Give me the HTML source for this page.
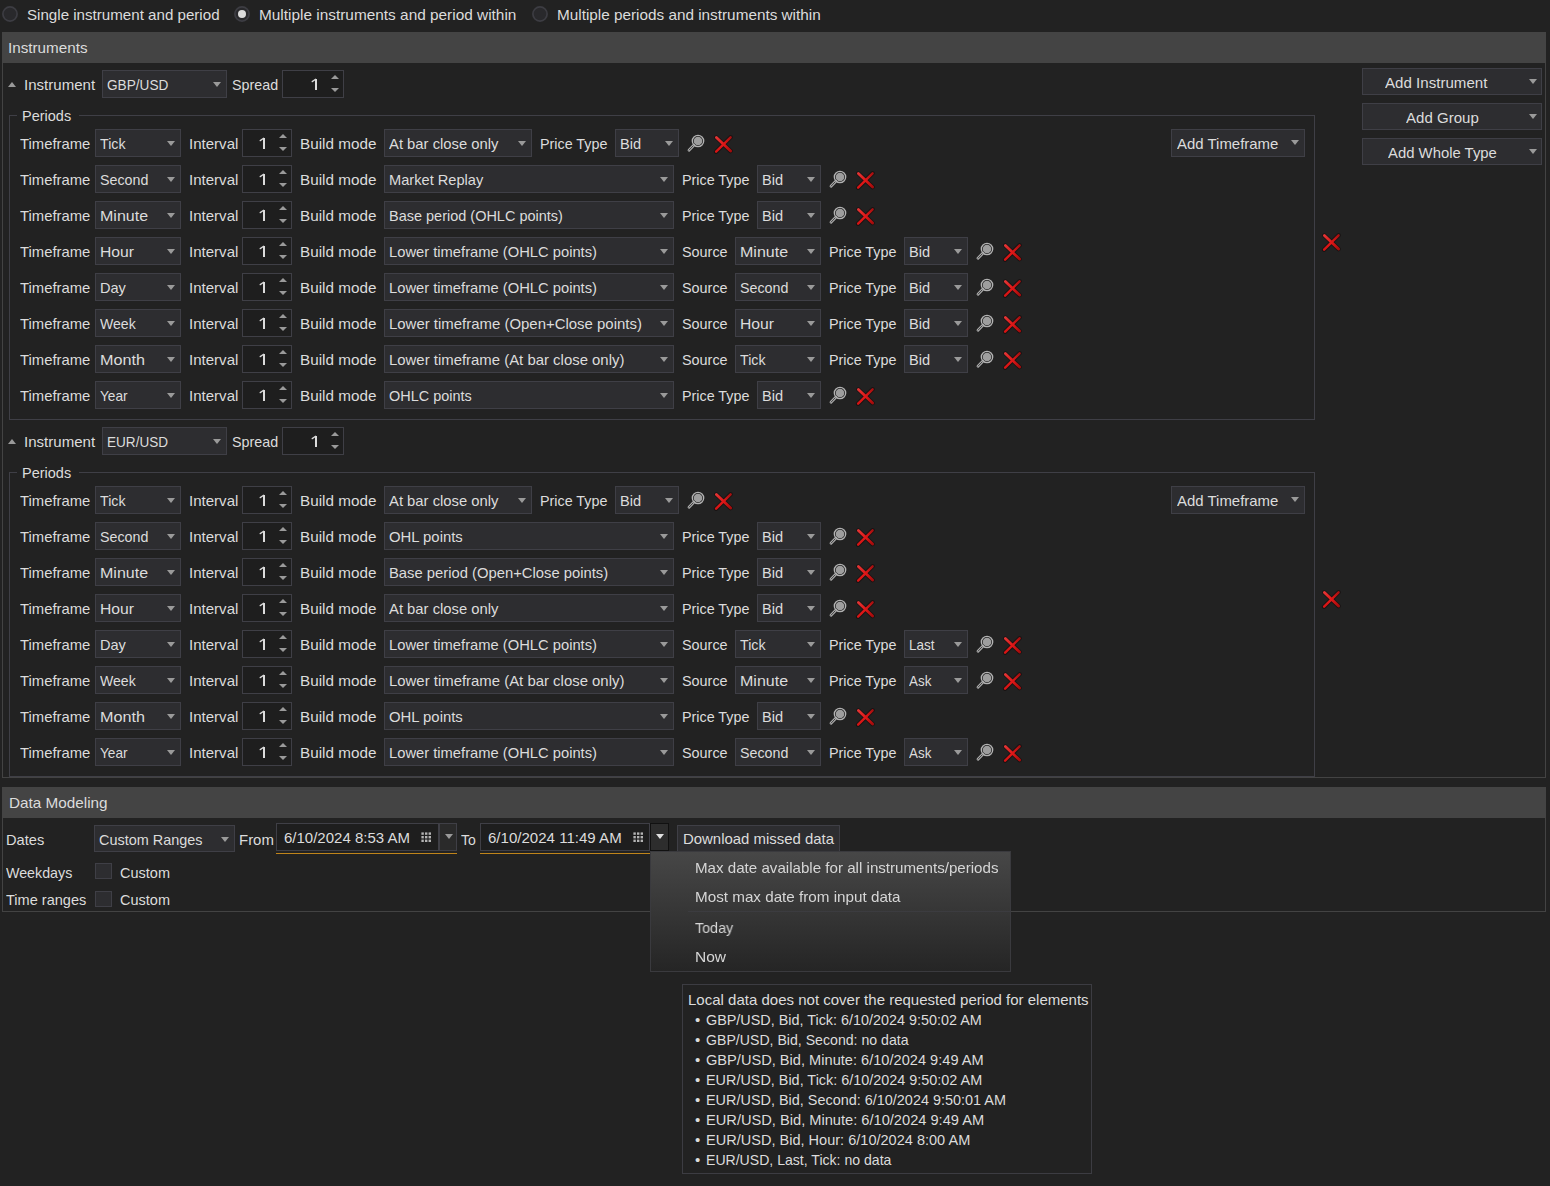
<!DOCTYPE html><html><head><meta charset="utf-8"><style>
html,body{margin:0;padding:0;width:1550px;height:1186px;overflow:hidden;background:#222222}
.a{position:absolute}
.t{position:absolute;font-family:"Liberation Sans",sans-serif;font-size:15px;line-height:17px;color:#dcdcdc;white-space:nowrap}
.m{position:absolute;font-family:"Liberation Sans",sans-serif;font-size:15px;line-height:17px;color:#d6d6d6;white-space:nowrap;will-change:transform}
</style></head><body>

<svg class="a" style="left:2px;top:6px" width="16" height="16" viewBox="0 0 16 16"><circle cx="8" cy="8" r="7.1" fill="#29292c" stroke="#3d3d43" stroke-width="1.7"/></svg>
<div class="t" style="left:27px;top:6px;transform:scaleX(1.0084);transform-origin:0 0;">Single instrument and period</div>
<svg class="a" style="left:234px;top:6px" width="16" height="16" viewBox="0 0 16 16"><circle cx="8" cy="8" r="7.1" fill="#29292c" stroke="#3d3d43" stroke-width="1.7"/><circle cx="8" cy="8" r="4" fill="#dcdcdc"/></svg>
<div class="t" style="left:259px;top:6px;transform:scaleX(1.0256);transform-origin:0 0;">Multiple instruments and period within</div>
<svg class="a" style="left:532px;top:6px" width="16" height="16" viewBox="0 0 16 16"><circle cx="8" cy="8" r="7.1" fill="#29292c" stroke="#3d3d43" stroke-width="1.7"/></svg>
<div class="t" style="left:557px;top:6px;transform:scaleX(1.0202);transform-origin:0 0;">Multiple periods and instruments within</div>
<div class="a" style="left:2px;top:32px;width:1544px;height:31px;background:#444444;"></div>
<div class="t" style="left:8px;top:39px;transform:scaleX(1.0148);transform-origin:0 0;">Instruments</div>
<div class="a" style="left:2px;top:63px;width:1px;height:715px;background:#434343;"></div>
<div class="a" style="left:1545px;top:63px;width:1px;height:715px;background:#434343;"></div>
<div class="a" style="left:2px;top:777px;width:1544px;height:1px;background:#434343;"></div>
<div class="a" style="left:1362px;top:68px;width:180px;height:27px;background:#2d2d30;box-sizing:border-box;border:1px solid #3f3f46;"></div>
<div class="t" style="left:1385px;top:74px;transform:scaleX(1.0063);transform-origin:0 0;">Add Instrument</div>
<div class="a" style="left:1528.5px;top:79px;width:0;height:0;border-left:4.0px solid transparent;border-right:4.0px solid transparent;border-top:5px solid #9a9a9a"></div>
<div class="a" style="left:1362px;top:103px;width:180px;height:27px;background:#2d2d30;box-sizing:border-box;border:1px solid #3f3f46;"></div>
<div class="t" style="left:1406px;top:109px;transform:scaleX(1.0027);transform-origin:0 0;">Add Group</div>
<div class="a" style="left:1528.5px;top:114px;width:0;height:0;border-left:4.0px solid transparent;border-right:4.0px solid transparent;border-top:5px solid #9a9a9a"></div>
<div class="a" style="left:1362px;top:138px;width:180px;height:27px;background:#2d2d30;box-sizing:border-box;border:1px solid #3f3f46;"></div>
<div class="t" style="left:1388px;top:144px;transform:scaleX(0.9916);transform-origin:0 0;">Add Whole Type</div>
<div class="a" style="left:1528.5px;top:149px;width:0;height:0;border-left:4.0px solid transparent;border-right:4.0px solid transparent;border-top:5px solid #9a9a9a"></div>
<div class="a" style="left:8.0px;top:82px;width:0;height:0;border-left:4.0px solid transparent;border-right:4.0px solid transparent;border-bottom:5px solid #9a9a9a"></div>
<div class="t" style="left:24px;top:76px;transform:scaleX(1.0043);transform-origin:0 0;">Instrument</div>
<div class="a" style="left:102px;top:70px;width:125px;height:28px;background:#2d2d30;box-sizing:border-box;border:1px solid #3f3f46;"></div>
<div class="t" style="left:107px;top:76px;transform:scaleX(0.9087);transform-origin:0 0;">GBP/USD</div>
<div class="a" style="left:213.0px;top:82px;width:0;height:0;border-left:4.0px solid transparent;border-right:4.0px solid transparent;border-top:5px solid #9a9a9a"></div>
<div class="t" style="left:232px;top:76px;transform:scaleX(0.9536);transform-origin:0 0;">Spread</div>
<div class="a" style="left:282px;top:70px;width:62px;height:28px;background:#1e1e1e;box-sizing:border-box;border:1px solid #3f3f46;"></div>
<svg class="a" style="left:310px;top:78px" width="8" height="13" viewBox="0 0 8 13"><rect x="5" y="1" width="2" height="11" fill="#dcdcdc"/><path d="M2.2 3.6 L5.6 1.3" stroke="#dcdcdc" stroke-width="1.3" stroke-linecap="round"/></svg>
<div class="a" style="left:330.75px;top:74.8px;width:0;height:0;border-left:4.25px solid transparent;border-right:4.25px solid transparent;border-bottom:4.3px solid #9a9a9a"></div>
<div class="a" style="left:330.75px;top:88px;width:0;height:0;border-left:4.25px solid transparent;border-right:4.25px solid transparent;border-top:4.3px solid #9a9a9a"></div>
<div class="a" style="left:9px;top:115px;width:8px;height:1px;background:#3f3f46;"></div>
<div class="a" style="left:79px;top:115px;width:1236px;height:1px;background:#3f3f46;"></div>
<div class="a" style="left:9px;top:115px;width:1px;height:305px;background:#3f3f46;"></div>
<div class="a" style="left:1314px;top:115px;width:1px;height:305px;background:#3f3f46;"></div>
<div class="a" style="left:9px;top:419px;width:1306px;height:1px;background:#3f3f46;"></div>
<div class="t" style="left:22px;top:107px;transform:scaleX(0.9664);transform-origin:0 0;">Periods</div>
<div class="t" style="left:20px;top:135px;transform:scaleX(0.9890);transform-origin:0 0;">Timeframe</div>
<div class="a" style="left:95px;top:129px;width:86px;height:28px;background:#2d2d30;box-sizing:border-box;border:1px solid #3f3f46;"></div>
<div class="t" style="left:100px;top:135px;transform:scaleX(0.9476);transform-origin:0 0;">Tick</div>
<div class="a" style="left:167.0px;top:141px;width:0;height:0;border-left:4.0px solid transparent;border-right:4.0px solid transparent;border-top:5px solid #9a9a9a"></div>
<div class="t" style="left:189px;top:135px;transform:scaleX(1.0030);transform-origin:0 0;">Interval</div>
<div class="a" style="left:242px;top:129px;width:50px;height:28px;background:#1e1e1e;box-sizing:border-box;border:1px solid #3f3f46;"></div>
<svg class="a" style="left:258px;top:137px" width="8" height="13" viewBox="0 0 8 13"><rect x="5" y="1" width="2" height="11" fill="#dcdcdc"/><path d="M2.2 3.6 L5.6 1.3" stroke="#dcdcdc" stroke-width="1.3" stroke-linecap="round"/></svg>
<div class="a" style="left:278.75px;top:133.8px;width:0;height:0;border-left:4.25px solid transparent;border-right:4.25px solid transparent;border-bottom:4.3px solid #9a9a9a"></div>
<div class="a" style="left:278.75px;top:147px;width:0;height:0;border-left:4.25px solid transparent;border-right:4.25px solid transparent;border-top:4.3px solid #9a9a9a"></div>
<div class="t" style="left:300px;top:135px;transform:scaleX(1.0176);transform-origin:0 0;">Build mode</div>
<div class="a" style="left:384px;top:129px;width:148px;height:28px;background:#2d2d30;box-sizing:border-box;border:1px solid #3f3f46;"></div>
<div class="t" style="left:389px;top:135px;transform:scaleX(0.9875);transform-origin:0 0;">At bar close only</div>
<div class="a" style="left:518.0px;top:141px;width:0;height:0;border-left:4.0px solid transparent;border-right:4.0px solid transparent;border-top:5px solid #9a9a9a"></div>
<div class="t" style="left:540px;top:135px;transform:scaleX(0.9551);transform-origin:0 0;">Price Type</div>
<div class="a" style="left:615px;top:129px;width:64px;height:28px;background:#2d2d30;box-sizing:border-box;border:1px solid #3f3f46;"></div>
<div class="t" style="left:620px;top:135px;transform:scaleX(0.9736);transform-origin:0 0;">Bid</div>
<div class="a" style="left:665.0px;top:141px;width:0;height:0;border-left:4.0px solid transparent;border-right:4.0px solid transparent;border-top:5px solid #9a9a9a"></div>
<svg class="a" style="left:685px;top:133px" width="20" height="20" viewBox="0 0 20 20"><line x1="4" y1="17.2" x2="8.8" y2="12.2" stroke="#aaaaaa" stroke-width="2.8" stroke-linecap="round"/><line x1="4.1" y1="17.1" x2="8.4" y2="12.6" stroke="#262626" stroke-width="0.8" stroke-linecap="round"/><circle cx="13" cy="8" r="5.7" fill="none" stroke="#b2b2b2" stroke-width="1.3"/><circle cx="13" cy="8" r="4.3" fill="#9e9e9e"/></svg>
<svg class="a" style="left:713px;top:134px" width="20" height="20" viewBox="0 0 20 20"><defs><linearGradient id="rg1" gradientUnits="userSpaceOnUse" x1="3.4" y1="3.5" x2="17.6" y2="17.1"><stop offset="0" stop-color="#e23434"/><stop offset="0.5" stop-color="#e01818"/><stop offset="1" stop-color="#a60c0c"/></linearGradient><linearGradient id="rg2" gradientUnits="userSpaceOnUse" x1="17.6" y1="3.3" x2="3.1" y2="17.7"><stop offset="0" stop-color="#a81010"/><stop offset="0.5" stop-color="#e01818"/><stop offset="1" stop-color="#d61414"/></linearGradient></defs><path d="M3.4 3.5 L17.6 17.1 M17.6 3.3 L3.1 17.7" stroke="#0e0202" stroke-width="4.4" stroke-linecap="round" opacity="0.45"/><path d="M3.4 3.5 L17.6 17.1" stroke="url(#rg1)" stroke-width="2.8" stroke-linecap="round"/><path d="M17.6 3.3 L3.1 17.7" stroke="url(#rg2)" stroke-width="2.4" stroke-linecap="round"/></svg>
<div class="t" style="left:20px;top:171px;transform:scaleX(0.9890);transform-origin:0 0;">Timeframe</div>
<div class="a" style="left:95px;top:165px;width:86px;height:28px;background:#2d2d30;box-sizing:border-box;border:1px solid #3f3f46;"></div>
<div class="t" style="left:100px;top:171px;transform:scaleX(0.9499);transform-origin:0 0;">Second</div>
<div class="a" style="left:167.0px;top:177px;width:0;height:0;border-left:4.0px solid transparent;border-right:4.0px solid transparent;border-top:5px solid #9a9a9a"></div>
<div class="t" style="left:189px;top:171px;transform:scaleX(1.0030);transform-origin:0 0;">Interval</div>
<div class="a" style="left:242px;top:165px;width:50px;height:28px;background:#1e1e1e;box-sizing:border-box;border:1px solid #3f3f46;"></div>
<svg class="a" style="left:258px;top:173px" width="8" height="13" viewBox="0 0 8 13"><rect x="5" y="1" width="2" height="11" fill="#dcdcdc"/><path d="M2.2 3.6 L5.6 1.3" stroke="#dcdcdc" stroke-width="1.3" stroke-linecap="round"/></svg>
<div class="a" style="left:278.75px;top:169.8px;width:0;height:0;border-left:4.25px solid transparent;border-right:4.25px solid transparent;border-bottom:4.3px solid #9a9a9a"></div>
<div class="a" style="left:278.75px;top:183px;width:0;height:0;border-left:4.25px solid transparent;border-right:4.25px solid transparent;border-top:4.3px solid #9a9a9a"></div>
<div class="t" style="left:300px;top:171px;transform:scaleX(1.0176);transform-origin:0 0;">Build mode</div>
<div class="a" style="left:384px;top:165px;width:290px;height:28px;background:#2d2d30;box-sizing:border-box;border:1px solid #3f3f46;"></div>
<div class="t" style="left:389px;top:171px;transform:scaleX(0.9750);transform-origin:0 0;">Market Replay</div>
<div class="a" style="left:660.0px;top:177px;width:0;height:0;border-left:4.0px solid transparent;border-right:4.0px solid transparent;border-top:5px solid #9a9a9a"></div>
<div class="t" style="left:682px;top:171px;transform:scaleX(0.9551);transform-origin:0 0;">Price Type</div>
<div class="a" style="left:757px;top:165px;width:64px;height:28px;background:#2d2d30;box-sizing:border-box;border:1px solid #3f3f46;"></div>
<div class="t" style="left:762px;top:171px;transform:scaleX(0.9736);transform-origin:0 0;">Bid</div>
<div class="a" style="left:807.0px;top:177px;width:0;height:0;border-left:4.0px solid transparent;border-right:4.0px solid transparent;border-top:5px solid #9a9a9a"></div>
<svg class="a" style="left:827px;top:169px" width="20" height="20" viewBox="0 0 20 20"><line x1="4" y1="17.2" x2="8.8" y2="12.2" stroke="#aaaaaa" stroke-width="2.8" stroke-linecap="round"/><line x1="4.1" y1="17.1" x2="8.4" y2="12.6" stroke="#262626" stroke-width="0.8" stroke-linecap="round"/><circle cx="13" cy="8" r="5.7" fill="none" stroke="#b2b2b2" stroke-width="1.3"/><circle cx="13" cy="8" r="4.3" fill="#9e9e9e"/></svg>
<svg class="a" style="left:855px;top:170px" width="20" height="20" viewBox="0 0 20 20"><defs><linearGradient id="rg1" gradientUnits="userSpaceOnUse" x1="3.4" y1="3.5" x2="17.6" y2="17.1"><stop offset="0" stop-color="#e23434"/><stop offset="0.5" stop-color="#e01818"/><stop offset="1" stop-color="#a60c0c"/></linearGradient><linearGradient id="rg2" gradientUnits="userSpaceOnUse" x1="17.6" y1="3.3" x2="3.1" y2="17.7"><stop offset="0" stop-color="#a81010"/><stop offset="0.5" stop-color="#e01818"/><stop offset="1" stop-color="#d61414"/></linearGradient></defs><path d="M3.4 3.5 L17.6 17.1 M17.6 3.3 L3.1 17.7" stroke="#0e0202" stroke-width="4.4" stroke-linecap="round" opacity="0.45"/><path d="M3.4 3.5 L17.6 17.1" stroke="url(#rg1)" stroke-width="2.8" stroke-linecap="round"/><path d="M17.6 3.3 L3.1 17.7" stroke="url(#rg2)" stroke-width="2.4" stroke-linecap="round"/></svg>
<div class="t" style="left:20px;top:207px;transform:scaleX(0.9890);transform-origin:0 0;">Timeframe</div>
<div class="a" style="left:95px;top:201px;width:86px;height:28px;background:#2d2d30;box-sizing:border-box;border:1px solid #3f3f46;"></div>
<div class="t" style="left:100px;top:207px;transform:scaleX(1.0669);transform-origin:0 0;">Minute</div>
<div class="a" style="left:167.0px;top:213px;width:0;height:0;border-left:4.0px solid transparent;border-right:4.0px solid transparent;border-top:5px solid #9a9a9a"></div>
<div class="t" style="left:189px;top:207px;transform:scaleX(1.0030);transform-origin:0 0;">Interval</div>
<div class="a" style="left:242px;top:201px;width:50px;height:28px;background:#1e1e1e;box-sizing:border-box;border:1px solid #3f3f46;"></div>
<svg class="a" style="left:258px;top:209px" width="8" height="13" viewBox="0 0 8 13"><rect x="5" y="1" width="2" height="11" fill="#dcdcdc"/><path d="M2.2 3.6 L5.6 1.3" stroke="#dcdcdc" stroke-width="1.3" stroke-linecap="round"/></svg>
<div class="a" style="left:278.75px;top:205.8px;width:0;height:0;border-left:4.25px solid transparent;border-right:4.25px solid transparent;border-bottom:4.3px solid #9a9a9a"></div>
<div class="a" style="left:278.75px;top:219px;width:0;height:0;border-left:4.25px solid transparent;border-right:4.25px solid transparent;border-top:4.3px solid #9a9a9a"></div>
<div class="t" style="left:300px;top:207px;transform:scaleX(1.0176);transform-origin:0 0;">Build mode</div>
<div class="a" style="left:384px;top:201px;width:290px;height:28px;background:#2d2d30;box-sizing:border-box;border:1px solid #3f3f46;"></div>
<div class="t" style="left:389px;top:207px;transform:scaleX(0.9655);transform-origin:0 0;">Base period (OHLC points)</div>
<div class="a" style="left:660.0px;top:213px;width:0;height:0;border-left:4.0px solid transparent;border-right:4.0px solid transparent;border-top:5px solid #9a9a9a"></div>
<div class="t" style="left:682px;top:207px;transform:scaleX(0.9551);transform-origin:0 0;">Price Type</div>
<div class="a" style="left:757px;top:201px;width:64px;height:28px;background:#2d2d30;box-sizing:border-box;border:1px solid #3f3f46;"></div>
<div class="t" style="left:762px;top:207px;transform:scaleX(0.9736);transform-origin:0 0;">Bid</div>
<div class="a" style="left:807.0px;top:213px;width:0;height:0;border-left:4.0px solid transparent;border-right:4.0px solid transparent;border-top:5px solid #9a9a9a"></div>
<svg class="a" style="left:827px;top:205px" width="20" height="20" viewBox="0 0 20 20"><line x1="4" y1="17.2" x2="8.8" y2="12.2" stroke="#aaaaaa" stroke-width="2.8" stroke-linecap="round"/><line x1="4.1" y1="17.1" x2="8.4" y2="12.6" stroke="#262626" stroke-width="0.8" stroke-linecap="round"/><circle cx="13" cy="8" r="5.7" fill="none" stroke="#b2b2b2" stroke-width="1.3"/><circle cx="13" cy="8" r="4.3" fill="#9e9e9e"/></svg>
<svg class="a" style="left:855px;top:206px" width="20" height="20" viewBox="0 0 20 20"><defs><linearGradient id="rg1" gradientUnits="userSpaceOnUse" x1="3.4" y1="3.5" x2="17.6" y2="17.1"><stop offset="0" stop-color="#e23434"/><stop offset="0.5" stop-color="#e01818"/><stop offset="1" stop-color="#a60c0c"/></linearGradient><linearGradient id="rg2" gradientUnits="userSpaceOnUse" x1="17.6" y1="3.3" x2="3.1" y2="17.7"><stop offset="0" stop-color="#a81010"/><stop offset="0.5" stop-color="#e01818"/><stop offset="1" stop-color="#d61414"/></linearGradient></defs><path d="M3.4 3.5 L17.6 17.1 M17.6 3.3 L3.1 17.7" stroke="#0e0202" stroke-width="4.4" stroke-linecap="round" opacity="0.45"/><path d="M3.4 3.5 L17.6 17.1" stroke="url(#rg1)" stroke-width="2.8" stroke-linecap="round"/><path d="M17.6 3.3 L3.1 17.7" stroke="url(#rg2)" stroke-width="2.4" stroke-linecap="round"/></svg>
<div class="t" style="left:20px;top:243px;transform:scaleX(0.9890);transform-origin:0 0;">Timeframe</div>
<div class="a" style="left:95px;top:237px;width:86px;height:28px;background:#2d2d30;box-sizing:border-box;border:1px solid #3f3f46;"></div>
<div class="t" style="left:100px;top:243px;transform:scaleX(1.0471);transform-origin:0 0;">Hour</div>
<div class="a" style="left:167.0px;top:249px;width:0;height:0;border-left:4.0px solid transparent;border-right:4.0px solid transparent;border-top:5px solid #9a9a9a"></div>
<div class="t" style="left:189px;top:243px;transform:scaleX(1.0030);transform-origin:0 0;">Interval</div>
<div class="a" style="left:242px;top:237px;width:50px;height:28px;background:#1e1e1e;box-sizing:border-box;border:1px solid #3f3f46;"></div>
<svg class="a" style="left:258px;top:245px" width="8" height="13" viewBox="0 0 8 13"><rect x="5" y="1" width="2" height="11" fill="#dcdcdc"/><path d="M2.2 3.6 L5.6 1.3" stroke="#dcdcdc" stroke-width="1.3" stroke-linecap="round"/></svg>
<div class="a" style="left:278.75px;top:241.8px;width:0;height:0;border-left:4.25px solid transparent;border-right:4.25px solid transparent;border-bottom:4.3px solid #9a9a9a"></div>
<div class="a" style="left:278.75px;top:255px;width:0;height:0;border-left:4.25px solid transparent;border-right:4.25px solid transparent;border-top:4.3px solid #9a9a9a"></div>
<div class="t" style="left:300px;top:243px;transform:scaleX(1.0176);transform-origin:0 0;">Build mode</div>
<div class="a" style="left:384px;top:237px;width:290px;height:28px;background:#2d2d30;box-sizing:border-box;border:1px solid #3f3f46;"></div>
<div class="t" style="left:389px;top:243px;transform:scaleX(0.9823);transform-origin:0 0;">Lower timeframe (OHLC points)</div>
<div class="a" style="left:660.0px;top:249px;width:0;height:0;border-left:4.0px solid transparent;border-right:4.0px solid transparent;border-top:5px solid #9a9a9a"></div>
<div class="t" style="left:682px;top:243px;transform:scaleX(0.9601);transform-origin:0 0;">Source</div>
<div class="a" style="left:735px;top:237px;width:86px;height:28px;background:#2d2d30;box-sizing:border-box;border:1px solid #3f3f46;"></div>
<div class="t" style="left:740px;top:243px;transform:scaleX(1.0669);transform-origin:0 0;">Minute</div>
<div class="a" style="left:807.0px;top:249px;width:0;height:0;border-left:4.0px solid transparent;border-right:4.0px solid transparent;border-top:5px solid #9a9a9a"></div>
<div class="t" style="left:829px;top:243px;transform:scaleX(0.9551);transform-origin:0 0;">Price Type</div>
<div class="a" style="left:904px;top:237px;width:64px;height:28px;background:#2d2d30;box-sizing:border-box;border:1px solid #3f3f46;"></div>
<div class="t" style="left:909px;top:243px;transform:scaleX(0.9736);transform-origin:0 0;">Bid</div>
<div class="a" style="left:954.0px;top:249px;width:0;height:0;border-left:4.0px solid transparent;border-right:4.0px solid transparent;border-top:5px solid #9a9a9a"></div>
<svg class="a" style="left:974px;top:241px" width="20" height="20" viewBox="0 0 20 20"><line x1="4" y1="17.2" x2="8.8" y2="12.2" stroke="#aaaaaa" stroke-width="2.8" stroke-linecap="round"/><line x1="4.1" y1="17.1" x2="8.4" y2="12.6" stroke="#262626" stroke-width="0.8" stroke-linecap="round"/><circle cx="13" cy="8" r="5.7" fill="none" stroke="#b2b2b2" stroke-width="1.3"/><circle cx="13" cy="8" r="4.3" fill="#9e9e9e"/></svg>
<svg class="a" style="left:1002px;top:242px" width="20" height="20" viewBox="0 0 20 20"><defs><linearGradient id="rg1" gradientUnits="userSpaceOnUse" x1="3.4" y1="3.5" x2="17.6" y2="17.1"><stop offset="0" stop-color="#e23434"/><stop offset="0.5" stop-color="#e01818"/><stop offset="1" stop-color="#a60c0c"/></linearGradient><linearGradient id="rg2" gradientUnits="userSpaceOnUse" x1="17.6" y1="3.3" x2="3.1" y2="17.7"><stop offset="0" stop-color="#a81010"/><stop offset="0.5" stop-color="#e01818"/><stop offset="1" stop-color="#d61414"/></linearGradient></defs><path d="M3.4 3.5 L17.6 17.1 M17.6 3.3 L3.1 17.7" stroke="#0e0202" stroke-width="4.4" stroke-linecap="round" opacity="0.45"/><path d="M3.4 3.5 L17.6 17.1" stroke="url(#rg1)" stroke-width="2.8" stroke-linecap="round"/><path d="M17.6 3.3 L3.1 17.7" stroke="url(#rg2)" stroke-width="2.4" stroke-linecap="round"/></svg>
<div class="t" style="left:20px;top:279px;transform:scaleX(0.9890);transform-origin:0 0;">Timeframe</div>
<div class="a" style="left:95px;top:273px;width:86px;height:28px;background:#2d2d30;box-sizing:border-box;border:1px solid #3f3f46;"></div>
<div class="t" style="left:100px;top:279px;transform:scaleX(0.9704);transform-origin:0 0;">Day</div>
<div class="a" style="left:167.0px;top:285px;width:0;height:0;border-left:4.0px solid transparent;border-right:4.0px solid transparent;border-top:5px solid #9a9a9a"></div>
<div class="t" style="left:189px;top:279px;transform:scaleX(1.0030);transform-origin:0 0;">Interval</div>
<div class="a" style="left:242px;top:273px;width:50px;height:28px;background:#1e1e1e;box-sizing:border-box;border:1px solid #3f3f46;"></div>
<svg class="a" style="left:258px;top:281px" width="8" height="13" viewBox="0 0 8 13"><rect x="5" y="1" width="2" height="11" fill="#dcdcdc"/><path d="M2.2 3.6 L5.6 1.3" stroke="#dcdcdc" stroke-width="1.3" stroke-linecap="round"/></svg>
<div class="a" style="left:278.75px;top:277.8px;width:0;height:0;border-left:4.25px solid transparent;border-right:4.25px solid transparent;border-bottom:4.3px solid #9a9a9a"></div>
<div class="a" style="left:278.75px;top:291px;width:0;height:0;border-left:4.25px solid transparent;border-right:4.25px solid transparent;border-top:4.3px solid #9a9a9a"></div>
<div class="t" style="left:300px;top:279px;transform:scaleX(1.0176);transform-origin:0 0;">Build mode</div>
<div class="a" style="left:384px;top:273px;width:290px;height:28px;background:#2d2d30;box-sizing:border-box;border:1px solid #3f3f46;"></div>
<div class="t" style="left:389px;top:279px;transform:scaleX(0.9823);transform-origin:0 0;">Lower timeframe (OHLC points)</div>
<div class="a" style="left:660.0px;top:285px;width:0;height:0;border-left:4.0px solid transparent;border-right:4.0px solid transparent;border-top:5px solid #9a9a9a"></div>
<div class="t" style="left:682px;top:279px;transform:scaleX(0.9601);transform-origin:0 0;">Source</div>
<div class="a" style="left:735px;top:273px;width:86px;height:28px;background:#2d2d30;box-sizing:border-box;border:1px solid #3f3f46;"></div>
<div class="t" style="left:740px;top:279px;transform:scaleX(0.9499);transform-origin:0 0;">Second</div>
<div class="a" style="left:807.0px;top:285px;width:0;height:0;border-left:4.0px solid transparent;border-right:4.0px solid transparent;border-top:5px solid #9a9a9a"></div>
<div class="t" style="left:829px;top:279px;transform:scaleX(0.9551);transform-origin:0 0;">Price Type</div>
<div class="a" style="left:904px;top:273px;width:64px;height:28px;background:#2d2d30;box-sizing:border-box;border:1px solid #3f3f46;"></div>
<div class="t" style="left:909px;top:279px;transform:scaleX(0.9736);transform-origin:0 0;">Bid</div>
<div class="a" style="left:954.0px;top:285px;width:0;height:0;border-left:4.0px solid transparent;border-right:4.0px solid transparent;border-top:5px solid #9a9a9a"></div>
<svg class="a" style="left:974px;top:277px" width="20" height="20" viewBox="0 0 20 20"><line x1="4" y1="17.2" x2="8.8" y2="12.2" stroke="#aaaaaa" stroke-width="2.8" stroke-linecap="round"/><line x1="4.1" y1="17.1" x2="8.4" y2="12.6" stroke="#262626" stroke-width="0.8" stroke-linecap="round"/><circle cx="13" cy="8" r="5.7" fill="none" stroke="#b2b2b2" stroke-width="1.3"/><circle cx="13" cy="8" r="4.3" fill="#9e9e9e"/></svg>
<svg class="a" style="left:1002px;top:278px" width="20" height="20" viewBox="0 0 20 20"><defs><linearGradient id="rg1" gradientUnits="userSpaceOnUse" x1="3.4" y1="3.5" x2="17.6" y2="17.1"><stop offset="0" stop-color="#e23434"/><stop offset="0.5" stop-color="#e01818"/><stop offset="1" stop-color="#a60c0c"/></linearGradient><linearGradient id="rg2" gradientUnits="userSpaceOnUse" x1="17.6" y1="3.3" x2="3.1" y2="17.7"><stop offset="0" stop-color="#a81010"/><stop offset="0.5" stop-color="#e01818"/><stop offset="1" stop-color="#d61414"/></linearGradient></defs><path d="M3.4 3.5 L17.6 17.1 M17.6 3.3 L3.1 17.7" stroke="#0e0202" stroke-width="4.4" stroke-linecap="round" opacity="0.45"/><path d="M3.4 3.5 L17.6 17.1" stroke="url(#rg1)" stroke-width="2.8" stroke-linecap="round"/><path d="M17.6 3.3 L3.1 17.7" stroke="url(#rg2)" stroke-width="2.4" stroke-linecap="round"/></svg>
<div class="t" style="left:20px;top:315px;transform:scaleX(0.9890);transform-origin:0 0;">Timeframe</div>
<div class="a" style="left:95px;top:309px;width:86px;height:28px;background:#2d2d30;box-sizing:border-box;border:1px solid #3f3f46;"></div>
<div class="t" style="left:100px;top:315px;transform:scaleX(0.9385);transform-origin:0 0;">Week</div>
<div class="a" style="left:167.0px;top:321px;width:0;height:0;border-left:4.0px solid transparent;border-right:4.0px solid transparent;border-top:5px solid #9a9a9a"></div>
<div class="t" style="left:189px;top:315px;transform:scaleX(1.0030);transform-origin:0 0;">Interval</div>
<div class="a" style="left:242px;top:309px;width:50px;height:28px;background:#1e1e1e;box-sizing:border-box;border:1px solid #3f3f46;"></div>
<svg class="a" style="left:258px;top:317px" width="8" height="13" viewBox="0 0 8 13"><rect x="5" y="1" width="2" height="11" fill="#dcdcdc"/><path d="M2.2 3.6 L5.6 1.3" stroke="#dcdcdc" stroke-width="1.3" stroke-linecap="round"/></svg>
<div class="a" style="left:278.75px;top:313.8px;width:0;height:0;border-left:4.25px solid transparent;border-right:4.25px solid transparent;border-bottom:4.3px solid #9a9a9a"></div>
<div class="a" style="left:278.75px;top:327px;width:0;height:0;border-left:4.25px solid transparent;border-right:4.25px solid transparent;border-top:4.3px solid #9a9a9a"></div>
<div class="t" style="left:300px;top:315px;transform:scaleX(1.0176);transform-origin:0 0;">Build mode</div>
<div class="a" style="left:384px;top:309px;width:290px;height:28px;background:#2d2d30;box-sizing:border-box;border:1px solid #3f3f46;"></div>
<div class="t" style="left:389px;top:315px;transform:scaleX(0.9962);transform-origin:0 0;">Lower timeframe (Open+Close points)</div>
<div class="a" style="left:660.0px;top:321px;width:0;height:0;border-left:4.0px solid transparent;border-right:4.0px solid transparent;border-top:5px solid #9a9a9a"></div>
<div class="t" style="left:682px;top:315px;transform:scaleX(0.9601);transform-origin:0 0;">Source</div>
<div class="a" style="left:735px;top:309px;width:86px;height:28px;background:#2d2d30;box-sizing:border-box;border:1px solid #3f3f46;"></div>
<div class="t" style="left:740px;top:315px;transform:scaleX(1.0471);transform-origin:0 0;">Hour</div>
<div class="a" style="left:807.0px;top:321px;width:0;height:0;border-left:4.0px solid transparent;border-right:4.0px solid transparent;border-top:5px solid #9a9a9a"></div>
<div class="t" style="left:829px;top:315px;transform:scaleX(0.9551);transform-origin:0 0;">Price Type</div>
<div class="a" style="left:904px;top:309px;width:64px;height:28px;background:#2d2d30;box-sizing:border-box;border:1px solid #3f3f46;"></div>
<div class="t" style="left:909px;top:315px;transform:scaleX(0.9736);transform-origin:0 0;">Bid</div>
<div class="a" style="left:954.0px;top:321px;width:0;height:0;border-left:4.0px solid transparent;border-right:4.0px solid transparent;border-top:5px solid #9a9a9a"></div>
<svg class="a" style="left:974px;top:313px" width="20" height="20" viewBox="0 0 20 20"><line x1="4" y1="17.2" x2="8.8" y2="12.2" stroke="#aaaaaa" stroke-width="2.8" stroke-linecap="round"/><line x1="4.1" y1="17.1" x2="8.4" y2="12.6" stroke="#262626" stroke-width="0.8" stroke-linecap="round"/><circle cx="13" cy="8" r="5.7" fill="none" stroke="#b2b2b2" stroke-width="1.3"/><circle cx="13" cy="8" r="4.3" fill="#9e9e9e"/></svg>
<svg class="a" style="left:1002px;top:314px" width="20" height="20" viewBox="0 0 20 20"><defs><linearGradient id="rg1" gradientUnits="userSpaceOnUse" x1="3.4" y1="3.5" x2="17.6" y2="17.1"><stop offset="0" stop-color="#e23434"/><stop offset="0.5" stop-color="#e01818"/><stop offset="1" stop-color="#a60c0c"/></linearGradient><linearGradient id="rg2" gradientUnits="userSpaceOnUse" x1="17.6" y1="3.3" x2="3.1" y2="17.7"><stop offset="0" stop-color="#a81010"/><stop offset="0.5" stop-color="#e01818"/><stop offset="1" stop-color="#d61414"/></linearGradient></defs><path d="M3.4 3.5 L17.6 17.1 M17.6 3.3 L3.1 17.7" stroke="#0e0202" stroke-width="4.4" stroke-linecap="round" opacity="0.45"/><path d="M3.4 3.5 L17.6 17.1" stroke="url(#rg1)" stroke-width="2.8" stroke-linecap="round"/><path d="M17.6 3.3 L3.1 17.7" stroke="url(#rg2)" stroke-width="2.4" stroke-linecap="round"/></svg>
<div class="t" style="left:20px;top:351px;transform:scaleX(0.9890);transform-origin:0 0;">Timeframe</div>
<div class="a" style="left:95px;top:345px;width:86px;height:28px;background:#2d2d30;box-sizing:border-box;border:1px solid #3f3f46;"></div>
<div class="t" style="left:100px;top:351px;transform:scaleX(1.0781);transform-origin:0 0;">Month</div>
<div class="a" style="left:167.0px;top:357px;width:0;height:0;border-left:4.0px solid transparent;border-right:4.0px solid transparent;border-top:5px solid #9a9a9a"></div>
<div class="t" style="left:189px;top:351px;transform:scaleX(1.0030);transform-origin:0 0;">Interval</div>
<div class="a" style="left:242px;top:345px;width:50px;height:28px;background:#1e1e1e;box-sizing:border-box;border:1px solid #3f3f46;"></div>
<svg class="a" style="left:258px;top:353px" width="8" height="13" viewBox="0 0 8 13"><rect x="5" y="1" width="2" height="11" fill="#dcdcdc"/><path d="M2.2 3.6 L5.6 1.3" stroke="#dcdcdc" stroke-width="1.3" stroke-linecap="round"/></svg>
<div class="a" style="left:278.75px;top:349.8px;width:0;height:0;border-left:4.25px solid transparent;border-right:4.25px solid transparent;border-bottom:4.3px solid #9a9a9a"></div>
<div class="a" style="left:278.75px;top:363px;width:0;height:0;border-left:4.25px solid transparent;border-right:4.25px solid transparent;border-top:4.3px solid #9a9a9a"></div>
<div class="t" style="left:300px;top:351px;transform:scaleX(1.0176);transform-origin:0 0;">Build mode</div>
<div class="a" style="left:384px;top:345px;width:290px;height:28px;background:#2d2d30;box-sizing:border-box;border:1px solid #3f3f46;"></div>
<div class="t" style="left:389px;top:351px;transform:scaleX(0.9943);transform-origin:0 0;">Lower timeframe (At bar close only)</div>
<div class="a" style="left:660.0px;top:357px;width:0;height:0;border-left:4.0px solid transparent;border-right:4.0px solid transparent;border-top:5px solid #9a9a9a"></div>
<div class="t" style="left:682px;top:351px;transform:scaleX(0.9601);transform-origin:0 0;">Source</div>
<div class="a" style="left:735px;top:345px;width:86px;height:28px;background:#2d2d30;box-sizing:border-box;border:1px solid #3f3f46;"></div>
<div class="t" style="left:740px;top:351px;transform:scaleX(0.9476);transform-origin:0 0;">Tick</div>
<div class="a" style="left:807.0px;top:357px;width:0;height:0;border-left:4.0px solid transparent;border-right:4.0px solid transparent;border-top:5px solid #9a9a9a"></div>
<div class="t" style="left:829px;top:351px;transform:scaleX(0.9551);transform-origin:0 0;">Price Type</div>
<div class="a" style="left:904px;top:345px;width:64px;height:28px;background:#2d2d30;box-sizing:border-box;border:1px solid #3f3f46;"></div>
<div class="t" style="left:909px;top:351px;transform:scaleX(0.9736);transform-origin:0 0;">Bid</div>
<div class="a" style="left:954.0px;top:357px;width:0;height:0;border-left:4.0px solid transparent;border-right:4.0px solid transparent;border-top:5px solid #9a9a9a"></div>
<svg class="a" style="left:974px;top:349px" width="20" height="20" viewBox="0 0 20 20"><line x1="4" y1="17.2" x2="8.8" y2="12.2" stroke="#aaaaaa" stroke-width="2.8" stroke-linecap="round"/><line x1="4.1" y1="17.1" x2="8.4" y2="12.6" stroke="#262626" stroke-width="0.8" stroke-linecap="round"/><circle cx="13" cy="8" r="5.7" fill="none" stroke="#b2b2b2" stroke-width="1.3"/><circle cx="13" cy="8" r="4.3" fill="#9e9e9e"/></svg>
<svg class="a" style="left:1002px;top:350px" width="20" height="20" viewBox="0 0 20 20"><defs><linearGradient id="rg1" gradientUnits="userSpaceOnUse" x1="3.4" y1="3.5" x2="17.6" y2="17.1"><stop offset="0" stop-color="#e23434"/><stop offset="0.5" stop-color="#e01818"/><stop offset="1" stop-color="#a60c0c"/></linearGradient><linearGradient id="rg2" gradientUnits="userSpaceOnUse" x1="17.6" y1="3.3" x2="3.1" y2="17.7"><stop offset="0" stop-color="#a81010"/><stop offset="0.5" stop-color="#e01818"/><stop offset="1" stop-color="#d61414"/></linearGradient></defs><path d="M3.4 3.5 L17.6 17.1 M17.6 3.3 L3.1 17.7" stroke="#0e0202" stroke-width="4.4" stroke-linecap="round" opacity="0.45"/><path d="M3.4 3.5 L17.6 17.1" stroke="url(#rg1)" stroke-width="2.8" stroke-linecap="round"/><path d="M17.6 3.3 L3.1 17.7" stroke="url(#rg2)" stroke-width="2.4" stroke-linecap="round"/></svg>
<div class="t" style="left:20px;top:387px;transform:scaleX(0.9890);transform-origin:0 0;">Timeframe</div>
<div class="a" style="left:95px;top:381px;width:86px;height:28px;background:#2d2d30;box-sizing:border-box;border:1px solid #3f3f46;"></div>
<div class="t" style="left:100px;top:387px;transform:scaleX(0.9105);transform-origin:0 0;">Year</div>
<div class="a" style="left:167.0px;top:393px;width:0;height:0;border-left:4.0px solid transparent;border-right:4.0px solid transparent;border-top:5px solid #9a9a9a"></div>
<div class="t" style="left:189px;top:387px;transform:scaleX(1.0030);transform-origin:0 0;">Interval</div>
<div class="a" style="left:242px;top:381px;width:50px;height:28px;background:#1e1e1e;box-sizing:border-box;border:1px solid #3f3f46;"></div>
<svg class="a" style="left:258px;top:389px" width="8" height="13" viewBox="0 0 8 13"><rect x="5" y="1" width="2" height="11" fill="#dcdcdc"/><path d="M2.2 3.6 L5.6 1.3" stroke="#dcdcdc" stroke-width="1.3" stroke-linecap="round"/></svg>
<div class="a" style="left:278.75px;top:385.8px;width:0;height:0;border-left:4.25px solid transparent;border-right:4.25px solid transparent;border-bottom:4.3px solid #9a9a9a"></div>
<div class="a" style="left:278.75px;top:399px;width:0;height:0;border-left:4.25px solid transparent;border-right:4.25px solid transparent;border-top:4.3px solid #9a9a9a"></div>
<div class="t" style="left:300px;top:387px;transform:scaleX(1.0176);transform-origin:0 0;">Build mode</div>
<div class="a" style="left:384px;top:381px;width:290px;height:28px;background:#2d2d30;box-sizing:border-box;border:1px solid #3f3f46;"></div>
<div class="t" style="left:389px;top:387px;transform:scaleX(0.9629);transform-origin:0 0;">OHLC points</div>
<div class="a" style="left:660.0px;top:393px;width:0;height:0;border-left:4.0px solid transparent;border-right:4.0px solid transparent;border-top:5px solid #9a9a9a"></div>
<div class="t" style="left:682px;top:387px;transform:scaleX(0.9551);transform-origin:0 0;">Price Type</div>
<div class="a" style="left:757px;top:381px;width:64px;height:28px;background:#2d2d30;box-sizing:border-box;border:1px solid #3f3f46;"></div>
<div class="t" style="left:762px;top:387px;transform:scaleX(0.9736);transform-origin:0 0;">Bid</div>
<div class="a" style="left:807.0px;top:393px;width:0;height:0;border-left:4.0px solid transparent;border-right:4.0px solid transparent;border-top:5px solid #9a9a9a"></div>
<svg class="a" style="left:827px;top:385px" width="20" height="20" viewBox="0 0 20 20"><line x1="4" y1="17.2" x2="8.8" y2="12.2" stroke="#aaaaaa" stroke-width="2.8" stroke-linecap="round"/><line x1="4.1" y1="17.1" x2="8.4" y2="12.6" stroke="#262626" stroke-width="0.8" stroke-linecap="round"/><circle cx="13" cy="8" r="5.7" fill="none" stroke="#b2b2b2" stroke-width="1.3"/><circle cx="13" cy="8" r="4.3" fill="#9e9e9e"/></svg>
<svg class="a" style="left:855px;top:386px" width="20" height="20" viewBox="0 0 20 20"><defs><linearGradient id="rg1" gradientUnits="userSpaceOnUse" x1="3.4" y1="3.5" x2="17.6" y2="17.1"><stop offset="0" stop-color="#e23434"/><stop offset="0.5" stop-color="#e01818"/><stop offset="1" stop-color="#a60c0c"/></linearGradient><linearGradient id="rg2" gradientUnits="userSpaceOnUse" x1="17.6" y1="3.3" x2="3.1" y2="17.7"><stop offset="0" stop-color="#a81010"/><stop offset="0.5" stop-color="#e01818"/><stop offset="1" stop-color="#d61414"/></linearGradient></defs><path d="M3.4 3.5 L17.6 17.1 M17.6 3.3 L3.1 17.7" stroke="#0e0202" stroke-width="4.4" stroke-linecap="round" opacity="0.45"/><path d="M3.4 3.5 L17.6 17.1" stroke="url(#rg1)" stroke-width="2.8" stroke-linecap="round"/><path d="M17.6 3.3 L3.1 17.7" stroke="url(#rg2)" stroke-width="2.4" stroke-linecap="round"/></svg>
<div class="a" style="left:1171px;top:129px;width:134px;height:28px;background:#2d2d30;box-sizing:border-box;border:1px solid #3f3f46;"></div>
<div class="t" style="left:1177px;top:135px;transform:scaleX(0.9967);transform-origin:0 0;">Add Timeframe</div>
<div class="a" style="left:1291.0px;top:140px;width:0;height:0;border-left:4.0px solid transparent;border-right:4.0px solid transparent;border-top:5px solid #9a9a9a"></div>
<svg class="a" style="left:1321px;top:232px" width="20" height="20" viewBox="0 0 20 20"><defs><linearGradient id="rg1" gradientUnits="userSpaceOnUse" x1="3.4" y1="3.5" x2="17.6" y2="17.1"><stop offset="0" stop-color="#e23434"/><stop offset="0.5" stop-color="#e01818"/><stop offset="1" stop-color="#a60c0c"/></linearGradient><linearGradient id="rg2" gradientUnits="userSpaceOnUse" x1="17.6" y1="3.3" x2="3.1" y2="17.7"><stop offset="0" stop-color="#a81010"/><stop offset="0.5" stop-color="#e01818"/><stop offset="1" stop-color="#d61414"/></linearGradient></defs><path d="M3.4 3.5 L17.6 17.1 M17.6 3.3 L3.1 17.7" stroke="#0e0202" stroke-width="4.4" stroke-linecap="round" opacity="0.45"/><path d="M3.4 3.5 L17.6 17.1" stroke="url(#rg1)" stroke-width="2.8" stroke-linecap="round"/><path d="M17.6 3.3 L3.1 17.7" stroke="url(#rg2)" stroke-width="2.4" stroke-linecap="round"/></svg>
<div class="a" style="left:8.0px;top:439px;width:0;height:0;border-left:4.0px solid transparent;border-right:4.0px solid transparent;border-bottom:5px solid #9a9a9a"></div>
<div class="t" style="left:24px;top:433px;transform:scaleX(1.0043);transform-origin:0 0;">Instrument</div>
<div class="a" style="left:102px;top:427px;width:125px;height:28px;background:#2d2d30;box-sizing:border-box;border:1px solid #3f3f46;"></div>
<div class="t" style="left:107px;top:433px;transform:scaleX(0.9044);transform-origin:0 0;">EUR/USD</div>
<div class="a" style="left:213.0px;top:439px;width:0;height:0;border-left:4.0px solid transparent;border-right:4.0px solid transparent;border-top:5px solid #9a9a9a"></div>
<div class="t" style="left:232px;top:433px;transform:scaleX(0.9536);transform-origin:0 0;">Spread</div>
<div class="a" style="left:282px;top:427px;width:62px;height:28px;background:#1e1e1e;box-sizing:border-box;border:1px solid #3f3f46;"></div>
<svg class="a" style="left:310px;top:435px" width="8" height="13" viewBox="0 0 8 13"><rect x="5" y="1" width="2" height="11" fill="#dcdcdc"/><path d="M2.2 3.6 L5.6 1.3" stroke="#dcdcdc" stroke-width="1.3" stroke-linecap="round"/></svg>
<div class="a" style="left:330.75px;top:431.8px;width:0;height:0;border-left:4.25px solid transparent;border-right:4.25px solid transparent;border-bottom:4.3px solid #9a9a9a"></div>
<div class="a" style="left:330.75px;top:445px;width:0;height:0;border-left:4.25px solid transparent;border-right:4.25px solid transparent;border-top:4.3px solid #9a9a9a"></div>
<div class="a" style="left:9px;top:472px;width:8px;height:1px;background:#3f3f46;"></div>
<div class="a" style="left:79px;top:472px;width:1236px;height:1px;background:#3f3f46;"></div>
<div class="a" style="left:9px;top:472px;width:1px;height:305px;background:#3f3f46;"></div>
<div class="a" style="left:1314px;top:472px;width:1px;height:305px;background:#3f3f46;"></div>
<div class="a" style="left:9px;top:776px;width:1306px;height:1px;background:#3f3f46;"></div>
<div class="t" style="left:22px;top:464px;transform:scaleX(0.9664);transform-origin:0 0;">Periods</div>
<div class="t" style="left:20px;top:492px;transform:scaleX(0.9890);transform-origin:0 0;">Timeframe</div>
<div class="a" style="left:95px;top:486px;width:86px;height:28px;background:#2d2d30;box-sizing:border-box;border:1px solid #3f3f46;"></div>
<div class="t" style="left:100px;top:492px;transform:scaleX(0.9476);transform-origin:0 0;">Tick</div>
<div class="a" style="left:167.0px;top:498px;width:0;height:0;border-left:4.0px solid transparent;border-right:4.0px solid transparent;border-top:5px solid #9a9a9a"></div>
<div class="t" style="left:189px;top:492px;transform:scaleX(1.0030);transform-origin:0 0;">Interval</div>
<div class="a" style="left:242px;top:486px;width:50px;height:28px;background:#1e1e1e;box-sizing:border-box;border:1px solid #3f3f46;"></div>
<svg class="a" style="left:258px;top:494px" width="8" height="13" viewBox="0 0 8 13"><rect x="5" y="1" width="2" height="11" fill="#dcdcdc"/><path d="M2.2 3.6 L5.6 1.3" stroke="#dcdcdc" stroke-width="1.3" stroke-linecap="round"/></svg>
<div class="a" style="left:278.75px;top:490.8px;width:0;height:0;border-left:4.25px solid transparent;border-right:4.25px solid transparent;border-bottom:4.3px solid #9a9a9a"></div>
<div class="a" style="left:278.75px;top:504px;width:0;height:0;border-left:4.25px solid transparent;border-right:4.25px solid transparent;border-top:4.3px solid #9a9a9a"></div>
<div class="t" style="left:300px;top:492px;transform:scaleX(1.0176);transform-origin:0 0;">Build mode</div>
<div class="a" style="left:384px;top:486px;width:148px;height:28px;background:#2d2d30;box-sizing:border-box;border:1px solid #3f3f46;"></div>
<div class="t" style="left:389px;top:492px;transform:scaleX(0.9875);transform-origin:0 0;">At bar close only</div>
<div class="a" style="left:518.0px;top:498px;width:0;height:0;border-left:4.0px solid transparent;border-right:4.0px solid transparent;border-top:5px solid #9a9a9a"></div>
<div class="t" style="left:540px;top:492px;transform:scaleX(0.9551);transform-origin:0 0;">Price Type</div>
<div class="a" style="left:615px;top:486px;width:64px;height:28px;background:#2d2d30;box-sizing:border-box;border:1px solid #3f3f46;"></div>
<div class="t" style="left:620px;top:492px;transform:scaleX(0.9736);transform-origin:0 0;">Bid</div>
<div class="a" style="left:665.0px;top:498px;width:0;height:0;border-left:4.0px solid transparent;border-right:4.0px solid transparent;border-top:5px solid #9a9a9a"></div>
<svg class="a" style="left:685px;top:490px" width="20" height="20" viewBox="0 0 20 20"><line x1="4" y1="17.2" x2="8.8" y2="12.2" stroke="#aaaaaa" stroke-width="2.8" stroke-linecap="round"/><line x1="4.1" y1="17.1" x2="8.4" y2="12.6" stroke="#262626" stroke-width="0.8" stroke-linecap="round"/><circle cx="13" cy="8" r="5.7" fill="none" stroke="#b2b2b2" stroke-width="1.3"/><circle cx="13" cy="8" r="4.3" fill="#9e9e9e"/></svg>
<svg class="a" style="left:713px;top:491px" width="20" height="20" viewBox="0 0 20 20"><defs><linearGradient id="rg1" gradientUnits="userSpaceOnUse" x1="3.4" y1="3.5" x2="17.6" y2="17.1"><stop offset="0" stop-color="#e23434"/><stop offset="0.5" stop-color="#e01818"/><stop offset="1" stop-color="#a60c0c"/></linearGradient><linearGradient id="rg2" gradientUnits="userSpaceOnUse" x1="17.6" y1="3.3" x2="3.1" y2="17.7"><stop offset="0" stop-color="#a81010"/><stop offset="0.5" stop-color="#e01818"/><stop offset="1" stop-color="#d61414"/></linearGradient></defs><path d="M3.4 3.5 L17.6 17.1 M17.6 3.3 L3.1 17.7" stroke="#0e0202" stroke-width="4.4" stroke-linecap="round" opacity="0.45"/><path d="M3.4 3.5 L17.6 17.1" stroke="url(#rg1)" stroke-width="2.8" stroke-linecap="round"/><path d="M17.6 3.3 L3.1 17.7" stroke="url(#rg2)" stroke-width="2.4" stroke-linecap="round"/></svg>
<div class="t" style="left:20px;top:528px;transform:scaleX(0.9890);transform-origin:0 0;">Timeframe</div>
<div class="a" style="left:95px;top:522px;width:86px;height:28px;background:#2d2d30;box-sizing:border-box;border:1px solid #3f3f46;"></div>
<div class="t" style="left:100px;top:528px;transform:scaleX(0.9499);transform-origin:0 0;">Second</div>
<div class="a" style="left:167.0px;top:534px;width:0;height:0;border-left:4.0px solid transparent;border-right:4.0px solid transparent;border-top:5px solid #9a9a9a"></div>
<div class="t" style="left:189px;top:528px;transform:scaleX(1.0030);transform-origin:0 0;">Interval</div>
<div class="a" style="left:242px;top:522px;width:50px;height:28px;background:#1e1e1e;box-sizing:border-box;border:1px solid #3f3f46;"></div>
<svg class="a" style="left:258px;top:530px" width="8" height="13" viewBox="0 0 8 13"><rect x="5" y="1" width="2" height="11" fill="#dcdcdc"/><path d="M2.2 3.6 L5.6 1.3" stroke="#dcdcdc" stroke-width="1.3" stroke-linecap="round"/></svg>
<div class="a" style="left:278.75px;top:526.8px;width:0;height:0;border-left:4.25px solid transparent;border-right:4.25px solid transparent;border-bottom:4.3px solid #9a9a9a"></div>
<div class="a" style="left:278.75px;top:540px;width:0;height:0;border-left:4.25px solid transparent;border-right:4.25px solid transparent;border-top:4.3px solid #9a9a9a"></div>
<div class="t" style="left:300px;top:528px;transform:scaleX(1.0176);transform-origin:0 0;">Build mode</div>
<div class="a" style="left:384px;top:522px;width:290px;height:28px;background:#2d2d30;box-sizing:border-box;border:1px solid #3f3f46;"></div>
<div class="t" style="left:389px;top:528px;transform:scaleX(0.9901);transform-origin:0 0;">OHL points</div>
<div class="a" style="left:660.0px;top:534px;width:0;height:0;border-left:4.0px solid transparent;border-right:4.0px solid transparent;border-top:5px solid #9a9a9a"></div>
<div class="t" style="left:682px;top:528px;transform:scaleX(0.9551);transform-origin:0 0;">Price Type</div>
<div class="a" style="left:757px;top:522px;width:64px;height:28px;background:#2d2d30;box-sizing:border-box;border:1px solid #3f3f46;"></div>
<div class="t" style="left:762px;top:528px;transform:scaleX(0.9736);transform-origin:0 0;">Bid</div>
<div class="a" style="left:807.0px;top:534px;width:0;height:0;border-left:4.0px solid transparent;border-right:4.0px solid transparent;border-top:5px solid #9a9a9a"></div>
<svg class="a" style="left:827px;top:526px" width="20" height="20" viewBox="0 0 20 20"><line x1="4" y1="17.2" x2="8.8" y2="12.2" stroke="#aaaaaa" stroke-width="2.8" stroke-linecap="round"/><line x1="4.1" y1="17.1" x2="8.4" y2="12.6" stroke="#262626" stroke-width="0.8" stroke-linecap="round"/><circle cx="13" cy="8" r="5.7" fill="none" stroke="#b2b2b2" stroke-width="1.3"/><circle cx="13" cy="8" r="4.3" fill="#9e9e9e"/></svg>
<svg class="a" style="left:855px;top:527px" width="20" height="20" viewBox="0 0 20 20"><defs><linearGradient id="rg1" gradientUnits="userSpaceOnUse" x1="3.4" y1="3.5" x2="17.6" y2="17.1"><stop offset="0" stop-color="#e23434"/><stop offset="0.5" stop-color="#e01818"/><stop offset="1" stop-color="#a60c0c"/></linearGradient><linearGradient id="rg2" gradientUnits="userSpaceOnUse" x1="17.6" y1="3.3" x2="3.1" y2="17.7"><stop offset="0" stop-color="#a81010"/><stop offset="0.5" stop-color="#e01818"/><stop offset="1" stop-color="#d61414"/></linearGradient></defs><path d="M3.4 3.5 L17.6 17.1 M17.6 3.3 L3.1 17.7" stroke="#0e0202" stroke-width="4.4" stroke-linecap="round" opacity="0.45"/><path d="M3.4 3.5 L17.6 17.1" stroke="url(#rg1)" stroke-width="2.8" stroke-linecap="round"/><path d="M17.6 3.3 L3.1 17.7" stroke="url(#rg2)" stroke-width="2.4" stroke-linecap="round"/></svg>
<div class="t" style="left:20px;top:564px;transform:scaleX(0.9890);transform-origin:0 0;">Timeframe</div>
<div class="a" style="left:95px;top:558px;width:86px;height:28px;background:#2d2d30;box-sizing:border-box;border:1px solid #3f3f46;"></div>
<div class="t" style="left:100px;top:564px;transform:scaleX(1.0669);transform-origin:0 0;">Minute</div>
<div class="a" style="left:167.0px;top:570px;width:0;height:0;border-left:4.0px solid transparent;border-right:4.0px solid transparent;border-top:5px solid #9a9a9a"></div>
<div class="t" style="left:189px;top:564px;transform:scaleX(1.0030);transform-origin:0 0;">Interval</div>
<div class="a" style="left:242px;top:558px;width:50px;height:28px;background:#1e1e1e;box-sizing:border-box;border:1px solid #3f3f46;"></div>
<svg class="a" style="left:258px;top:566px" width="8" height="13" viewBox="0 0 8 13"><rect x="5" y="1" width="2" height="11" fill="#dcdcdc"/><path d="M2.2 3.6 L5.6 1.3" stroke="#dcdcdc" stroke-width="1.3" stroke-linecap="round"/></svg>
<div class="a" style="left:278.75px;top:562.8px;width:0;height:0;border-left:4.25px solid transparent;border-right:4.25px solid transparent;border-bottom:4.3px solid #9a9a9a"></div>
<div class="a" style="left:278.75px;top:576px;width:0;height:0;border-left:4.25px solid transparent;border-right:4.25px solid transparent;border-top:4.3px solid #9a9a9a"></div>
<div class="t" style="left:300px;top:564px;transform:scaleX(1.0176);transform-origin:0 0;">Build mode</div>
<div class="a" style="left:384px;top:558px;width:290px;height:28px;background:#2d2d30;box-sizing:border-box;border:1px solid #3f3f46;"></div>
<div class="t" style="left:389px;top:564px;transform:scaleX(0.9864);transform-origin:0 0;">Base period (Open+Close points)</div>
<div class="a" style="left:660.0px;top:570px;width:0;height:0;border-left:4.0px solid transparent;border-right:4.0px solid transparent;border-top:5px solid #9a9a9a"></div>
<div class="t" style="left:682px;top:564px;transform:scaleX(0.9551);transform-origin:0 0;">Price Type</div>
<div class="a" style="left:757px;top:558px;width:64px;height:28px;background:#2d2d30;box-sizing:border-box;border:1px solid #3f3f46;"></div>
<div class="t" style="left:762px;top:564px;transform:scaleX(0.9736);transform-origin:0 0;">Bid</div>
<div class="a" style="left:807.0px;top:570px;width:0;height:0;border-left:4.0px solid transparent;border-right:4.0px solid transparent;border-top:5px solid #9a9a9a"></div>
<svg class="a" style="left:827px;top:562px" width="20" height="20" viewBox="0 0 20 20"><line x1="4" y1="17.2" x2="8.8" y2="12.2" stroke="#aaaaaa" stroke-width="2.8" stroke-linecap="round"/><line x1="4.1" y1="17.1" x2="8.4" y2="12.6" stroke="#262626" stroke-width="0.8" stroke-linecap="round"/><circle cx="13" cy="8" r="5.7" fill="none" stroke="#b2b2b2" stroke-width="1.3"/><circle cx="13" cy="8" r="4.3" fill="#9e9e9e"/></svg>
<svg class="a" style="left:855px;top:563px" width="20" height="20" viewBox="0 0 20 20"><defs><linearGradient id="rg1" gradientUnits="userSpaceOnUse" x1="3.4" y1="3.5" x2="17.6" y2="17.1"><stop offset="0" stop-color="#e23434"/><stop offset="0.5" stop-color="#e01818"/><stop offset="1" stop-color="#a60c0c"/></linearGradient><linearGradient id="rg2" gradientUnits="userSpaceOnUse" x1="17.6" y1="3.3" x2="3.1" y2="17.7"><stop offset="0" stop-color="#a81010"/><stop offset="0.5" stop-color="#e01818"/><stop offset="1" stop-color="#d61414"/></linearGradient></defs><path d="M3.4 3.5 L17.6 17.1 M17.6 3.3 L3.1 17.7" stroke="#0e0202" stroke-width="4.4" stroke-linecap="round" opacity="0.45"/><path d="M3.4 3.5 L17.6 17.1" stroke="url(#rg1)" stroke-width="2.8" stroke-linecap="round"/><path d="M17.6 3.3 L3.1 17.7" stroke="url(#rg2)" stroke-width="2.4" stroke-linecap="round"/></svg>
<div class="t" style="left:20px;top:600px;transform:scaleX(0.9890);transform-origin:0 0;">Timeframe</div>
<div class="a" style="left:95px;top:594px;width:86px;height:28px;background:#2d2d30;box-sizing:border-box;border:1px solid #3f3f46;"></div>
<div class="t" style="left:100px;top:600px;transform:scaleX(1.0471);transform-origin:0 0;">Hour</div>
<div class="a" style="left:167.0px;top:606px;width:0;height:0;border-left:4.0px solid transparent;border-right:4.0px solid transparent;border-top:5px solid #9a9a9a"></div>
<div class="t" style="left:189px;top:600px;transform:scaleX(1.0030);transform-origin:0 0;">Interval</div>
<div class="a" style="left:242px;top:594px;width:50px;height:28px;background:#1e1e1e;box-sizing:border-box;border:1px solid #3f3f46;"></div>
<svg class="a" style="left:258px;top:602px" width="8" height="13" viewBox="0 0 8 13"><rect x="5" y="1" width="2" height="11" fill="#dcdcdc"/><path d="M2.2 3.6 L5.6 1.3" stroke="#dcdcdc" stroke-width="1.3" stroke-linecap="round"/></svg>
<div class="a" style="left:278.75px;top:598.8px;width:0;height:0;border-left:4.25px solid transparent;border-right:4.25px solid transparent;border-bottom:4.3px solid #9a9a9a"></div>
<div class="a" style="left:278.75px;top:612px;width:0;height:0;border-left:4.25px solid transparent;border-right:4.25px solid transparent;border-top:4.3px solid #9a9a9a"></div>
<div class="t" style="left:300px;top:600px;transform:scaleX(1.0176);transform-origin:0 0;">Build mode</div>
<div class="a" style="left:384px;top:594px;width:290px;height:28px;background:#2d2d30;box-sizing:border-box;border:1px solid #3f3f46;"></div>
<div class="t" style="left:389px;top:600px;transform:scaleX(0.9875);transform-origin:0 0;">At bar close only</div>
<div class="a" style="left:660.0px;top:606px;width:0;height:0;border-left:4.0px solid transparent;border-right:4.0px solid transparent;border-top:5px solid #9a9a9a"></div>
<div class="t" style="left:682px;top:600px;transform:scaleX(0.9551);transform-origin:0 0;">Price Type</div>
<div class="a" style="left:757px;top:594px;width:64px;height:28px;background:#2d2d30;box-sizing:border-box;border:1px solid #3f3f46;"></div>
<div class="t" style="left:762px;top:600px;transform:scaleX(0.9736);transform-origin:0 0;">Bid</div>
<div class="a" style="left:807.0px;top:606px;width:0;height:0;border-left:4.0px solid transparent;border-right:4.0px solid transparent;border-top:5px solid #9a9a9a"></div>
<svg class="a" style="left:827px;top:598px" width="20" height="20" viewBox="0 0 20 20"><line x1="4" y1="17.2" x2="8.8" y2="12.2" stroke="#aaaaaa" stroke-width="2.8" stroke-linecap="round"/><line x1="4.1" y1="17.1" x2="8.4" y2="12.6" stroke="#262626" stroke-width="0.8" stroke-linecap="round"/><circle cx="13" cy="8" r="5.7" fill="none" stroke="#b2b2b2" stroke-width="1.3"/><circle cx="13" cy="8" r="4.3" fill="#9e9e9e"/></svg>
<svg class="a" style="left:855px;top:599px" width="20" height="20" viewBox="0 0 20 20"><defs><linearGradient id="rg1" gradientUnits="userSpaceOnUse" x1="3.4" y1="3.5" x2="17.6" y2="17.1"><stop offset="0" stop-color="#e23434"/><stop offset="0.5" stop-color="#e01818"/><stop offset="1" stop-color="#a60c0c"/></linearGradient><linearGradient id="rg2" gradientUnits="userSpaceOnUse" x1="17.6" y1="3.3" x2="3.1" y2="17.7"><stop offset="0" stop-color="#a81010"/><stop offset="0.5" stop-color="#e01818"/><stop offset="1" stop-color="#d61414"/></linearGradient></defs><path d="M3.4 3.5 L17.6 17.1 M17.6 3.3 L3.1 17.7" stroke="#0e0202" stroke-width="4.4" stroke-linecap="round" opacity="0.45"/><path d="M3.4 3.5 L17.6 17.1" stroke="url(#rg1)" stroke-width="2.8" stroke-linecap="round"/><path d="M17.6 3.3 L3.1 17.7" stroke="url(#rg2)" stroke-width="2.4" stroke-linecap="round"/></svg>
<div class="t" style="left:20px;top:636px;transform:scaleX(0.9890);transform-origin:0 0;">Timeframe</div>
<div class="a" style="left:95px;top:630px;width:86px;height:28px;background:#2d2d30;box-sizing:border-box;border:1px solid #3f3f46;"></div>
<div class="t" style="left:100px;top:636px;transform:scaleX(0.9704);transform-origin:0 0;">Day</div>
<div class="a" style="left:167.0px;top:642px;width:0;height:0;border-left:4.0px solid transparent;border-right:4.0px solid transparent;border-top:5px solid #9a9a9a"></div>
<div class="t" style="left:189px;top:636px;transform:scaleX(1.0030);transform-origin:0 0;">Interval</div>
<div class="a" style="left:242px;top:630px;width:50px;height:28px;background:#1e1e1e;box-sizing:border-box;border:1px solid #3f3f46;"></div>
<svg class="a" style="left:258px;top:638px" width="8" height="13" viewBox="0 0 8 13"><rect x="5" y="1" width="2" height="11" fill="#dcdcdc"/><path d="M2.2 3.6 L5.6 1.3" stroke="#dcdcdc" stroke-width="1.3" stroke-linecap="round"/></svg>
<div class="a" style="left:278.75px;top:634.8px;width:0;height:0;border-left:4.25px solid transparent;border-right:4.25px solid transparent;border-bottom:4.3px solid #9a9a9a"></div>
<div class="a" style="left:278.75px;top:648px;width:0;height:0;border-left:4.25px solid transparent;border-right:4.25px solid transparent;border-top:4.3px solid #9a9a9a"></div>
<div class="t" style="left:300px;top:636px;transform:scaleX(1.0176);transform-origin:0 0;">Build mode</div>
<div class="a" style="left:384px;top:630px;width:290px;height:28px;background:#2d2d30;box-sizing:border-box;border:1px solid #3f3f46;"></div>
<div class="t" style="left:389px;top:636px;transform:scaleX(0.9823);transform-origin:0 0;">Lower timeframe (OHLC points)</div>
<div class="a" style="left:660.0px;top:642px;width:0;height:0;border-left:4.0px solid transparent;border-right:4.0px solid transparent;border-top:5px solid #9a9a9a"></div>
<div class="t" style="left:682px;top:636px;transform:scaleX(0.9601);transform-origin:0 0;">Source</div>
<div class="a" style="left:735px;top:630px;width:86px;height:28px;background:#2d2d30;box-sizing:border-box;border:1px solid #3f3f46;"></div>
<div class="t" style="left:740px;top:636px;transform:scaleX(0.9476);transform-origin:0 0;">Tick</div>
<div class="a" style="left:807.0px;top:642px;width:0;height:0;border-left:4.0px solid transparent;border-right:4.0px solid transparent;border-top:5px solid #9a9a9a"></div>
<div class="t" style="left:829px;top:636px;transform:scaleX(0.9551);transform-origin:0 0;">Price Type</div>
<div class="a" style="left:904px;top:630px;width:64px;height:28px;background:#2d2d30;box-sizing:border-box;border:1px solid #3f3f46;"></div>
<div class="t" style="left:909px;top:636px;transform:scaleX(0.9012);transform-origin:0 0;">Last</div>
<div class="a" style="left:954.0px;top:642px;width:0;height:0;border-left:4.0px solid transparent;border-right:4.0px solid transparent;border-top:5px solid #9a9a9a"></div>
<svg class="a" style="left:974px;top:634px" width="20" height="20" viewBox="0 0 20 20"><line x1="4" y1="17.2" x2="8.8" y2="12.2" stroke="#aaaaaa" stroke-width="2.8" stroke-linecap="round"/><line x1="4.1" y1="17.1" x2="8.4" y2="12.6" stroke="#262626" stroke-width="0.8" stroke-linecap="round"/><circle cx="13" cy="8" r="5.7" fill="none" stroke="#b2b2b2" stroke-width="1.3"/><circle cx="13" cy="8" r="4.3" fill="#9e9e9e"/></svg>
<svg class="a" style="left:1002px;top:635px" width="20" height="20" viewBox="0 0 20 20"><defs><linearGradient id="rg1" gradientUnits="userSpaceOnUse" x1="3.4" y1="3.5" x2="17.6" y2="17.1"><stop offset="0" stop-color="#e23434"/><stop offset="0.5" stop-color="#e01818"/><stop offset="1" stop-color="#a60c0c"/></linearGradient><linearGradient id="rg2" gradientUnits="userSpaceOnUse" x1="17.6" y1="3.3" x2="3.1" y2="17.7"><stop offset="0" stop-color="#a81010"/><stop offset="0.5" stop-color="#e01818"/><stop offset="1" stop-color="#d61414"/></linearGradient></defs><path d="M3.4 3.5 L17.6 17.1 M17.6 3.3 L3.1 17.7" stroke="#0e0202" stroke-width="4.4" stroke-linecap="round" opacity="0.45"/><path d="M3.4 3.5 L17.6 17.1" stroke="url(#rg1)" stroke-width="2.8" stroke-linecap="round"/><path d="M17.6 3.3 L3.1 17.7" stroke="url(#rg2)" stroke-width="2.4" stroke-linecap="round"/></svg>
<div class="t" style="left:20px;top:672px;transform:scaleX(0.9890);transform-origin:0 0;">Timeframe</div>
<div class="a" style="left:95px;top:666px;width:86px;height:28px;background:#2d2d30;box-sizing:border-box;border:1px solid #3f3f46;"></div>
<div class="t" style="left:100px;top:672px;transform:scaleX(0.9385);transform-origin:0 0;">Week</div>
<div class="a" style="left:167.0px;top:678px;width:0;height:0;border-left:4.0px solid transparent;border-right:4.0px solid transparent;border-top:5px solid #9a9a9a"></div>
<div class="t" style="left:189px;top:672px;transform:scaleX(1.0030);transform-origin:0 0;">Interval</div>
<div class="a" style="left:242px;top:666px;width:50px;height:28px;background:#1e1e1e;box-sizing:border-box;border:1px solid #3f3f46;"></div>
<svg class="a" style="left:258px;top:674px" width="8" height="13" viewBox="0 0 8 13"><rect x="5" y="1" width="2" height="11" fill="#dcdcdc"/><path d="M2.2 3.6 L5.6 1.3" stroke="#dcdcdc" stroke-width="1.3" stroke-linecap="round"/></svg>
<div class="a" style="left:278.75px;top:670.8px;width:0;height:0;border-left:4.25px solid transparent;border-right:4.25px solid transparent;border-bottom:4.3px solid #9a9a9a"></div>
<div class="a" style="left:278.75px;top:684px;width:0;height:0;border-left:4.25px solid transparent;border-right:4.25px solid transparent;border-top:4.3px solid #9a9a9a"></div>
<div class="t" style="left:300px;top:672px;transform:scaleX(1.0176);transform-origin:0 0;">Build mode</div>
<div class="a" style="left:384px;top:666px;width:290px;height:28px;background:#2d2d30;box-sizing:border-box;border:1px solid #3f3f46;"></div>
<div class="t" style="left:389px;top:672px;transform:scaleX(0.9943);transform-origin:0 0;">Lower timeframe (At bar close only)</div>
<div class="a" style="left:660.0px;top:678px;width:0;height:0;border-left:4.0px solid transparent;border-right:4.0px solid transparent;border-top:5px solid #9a9a9a"></div>
<div class="t" style="left:682px;top:672px;transform:scaleX(0.9601);transform-origin:0 0;">Source</div>
<div class="a" style="left:735px;top:666px;width:86px;height:28px;background:#2d2d30;box-sizing:border-box;border:1px solid #3f3f46;"></div>
<div class="t" style="left:740px;top:672px;transform:scaleX(1.0669);transform-origin:0 0;">Minute</div>
<div class="a" style="left:807.0px;top:678px;width:0;height:0;border-left:4.0px solid transparent;border-right:4.0px solid transparent;border-top:5px solid #9a9a9a"></div>
<div class="t" style="left:829px;top:672px;transform:scaleX(0.9551);transform-origin:0 0;">Price Type</div>
<div class="a" style="left:904px;top:666px;width:64px;height:28px;background:#2d2d30;box-sizing:border-box;border:1px solid #3f3f46;"></div>
<div class="t" style="left:909px;top:672px;transform:scaleX(0.8939);transform-origin:0 0;">Ask</div>
<div class="a" style="left:954.0px;top:678px;width:0;height:0;border-left:4.0px solid transparent;border-right:4.0px solid transparent;border-top:5px solid #9a9a9a"></div>
<svg class="a" style="left:974px;top:670px" width="20" height="20" viewBox="0 0 20 20"><line x1="4" y1="17.2" x2="8.8" y2="12.2" stroke="#aaaaaa" stroke-width="2.8" stroke-linecap="round"/><line x1="4.1" y1="17.1" x2="8.4" y2="12.6" stroke="#262626" stroke-width="0.8" stroke-linecap="round"/><circle cx="13" cy="8" r="5.7" fill="none" stroke="#b2b2b2" stroke-width="1.3"/><circle cx="13" cy="8" r="4.3" fill="#9e9e9e"/></svg>
<svg class="a" style="left:1002px;top:671px" width="20" height="20" viewBox="0 0 20 20"><defs><linearGradient id="rg1" gradientUnits="userSpaceOnUse" x1="3.4" y1="3.5" x2="17.6" y2="17.1"><stop offset="0" stop-color="#e23434"/><stop offset="0.5" stop-color="#e01818"/><stop offset="1" stop-color="#a60c0c"/></linearGradient><linearGradient id="rg2" gradientUnits="userSpaceOnUse" x1="17.6" y1="3.3" x2="3.1" y2="17.7"><stop offset="0" stop-color="#a81010"/><stop offset="0.5" stop-color="#e01818"/><stop offset="1" stop-color="#d61414"/></linearGradient></defs><path d="M3.4 3.5 L17.6 17.1 M17.6 3.3 L3.1 17.7" stroke="#0e0202" stroke-width="4.4" stroke-linecap="round" opacity="0.45"/><path d="M3.4 3.5 L17.6 17.1" stroke="url(#rg1)" stroke-width="2.8" stroke-linecap="round"/><path d="M17.6 3.3 L3.1 17.7" stroke="url(#rg2)" stroke-width="2.4" stroke-linecap="round"/></svg>
<div class="t" style="left:20px;top:708px;transform:scaleX(0.9890);transform-origin:0 0;">Timeframe</div>
<div class="a" style="left:95px;top:702px;width:86px;height:28px;background:#2d2d30;box-sizing:border-box;border:1px solid #3f3f46;"></div>
<div class="t" style="left:100px;top:708px;transform:scaleX(1.0781);transform-origin:0 0;">Month</div>
<div class="a" style="left:167.0px;top:714px;width:0;height:0;border-left:4.0px solid transparent;border-right:4.0px solid transparent;border-top:5px solid #9a9a9a"></div>
<div class="t" style="left:189px;top:708px;transform:scaleX(1.0030);transform-origin:0 0;">Interval</div>
<div class="a" style="left:242px;top:702px;width:50px;height:28px;background:#1e1e1e;box-sizing:border-box;border:1px solid #3f3f46;"></div>
<svg class="a" style="left:258px;top:710px" width="8" height="13" viewBox="0 0 8 13"><rect x="5" y="1" width="2" height="11" fill="#dcdcdc"/><path d="M2.2 3.6 L5.6 1.3" stroke="#dcdcdc" stroke-width="1.3" stroke-linecap="round"/></svg>
<div class="a" style="left:278.75px;top:706.8px;width:0;height:0;border-left:4.25px solid transparent;border-right:4.25px solid transparent;border-bottom:4.3px solid #9a9a9a"></div>
<div class="a" style="left:278.75px;top:720px;width:0;height:0;border-left:4.25px solid transparent;border-right:4.25px solid transparent;border-top:4.3px solid #9a9a9a"></div>
<div class="t" style="left:300px;top:708px;transform:scaleX(1.0176);transform-origin:0 0;">Build mode</div>
<div class="a" style="left:384px;top:702px;width:290px;height:28px;background:#2d2d30;box-sizing:border-box;border:1px solid #3f3f46;"></div>
<div class="t" style="left:389px;top:708px;transform:scaleX(0.9901);transform-origin:0 0;">OHL points</div>
<div class="a" style="left:660.0px;top:714px;width:0;height:0;border-left:4.0px solid transparent;border-right:4.0px solid transparent;border-top:5px solid #9a9a9a"></div>
<div class="t" style="left:682px;top:708px;transform:scaleX(0.9551);transform-origin:0 0;">Price Type</div>
<div class="a" style="left:757px;top:702px;width:64px;height:28px;background:#2d2d30;box-sizing:border-box;border:1px solid #3f3f46;"></div>
<div class="t" style="left:762px;top:708px;transform:scaleX(0.9736);transform-origin:0 0;">Bid</div>
<div class="a" style="left:807.0px;top:714px;width:0;height:0;border-left:4.0px solid transparent;border-right:4.0px solid transparent;border-top:5px solid #9a9a9a"></div>
<svg class="a" style="left:827px;top:706px" width="20" height="20" viewBox="0 0 20 20"><line x1="4" y1="17.2" x2="8.8" y2="12.2" stroke="#aaaaaa" stroke-width="2.8" stroke-linecap="round"/><line x1="4.1" y1="17.1" x2="8.4" y2="12.6" stroke="#262626" stroke-width="0.8" stroke-linecap="round"/><circle cx="13" cy="8" r="5.7" fill="none" stroke="#b2b2b2" stroke-width="1.3"/><circle cx="13" cy="8" r="4.3" fill="#9e9e9e"/></svg>
<svg class="a" style="left:855px;top:707px" width="20" height="20" viewBox="0 0 20 20"><defs><linearGradient id="rg1" gradientUnits="userSpaceOnUse" x1="3.4" y1="3.5" x2="17.6" y2="17.1"><stop offset="0" stop-color="#e23434"/><stop offset="0.5" stop-color="#e01818"/><stop offset="1" stop-color="#a60c0c"/></linearGradient><linearGradient id="rg2" gradientUnits="userSpaceOnUse" x1="17.6" y1="3.3" x2="3.1" y2="17.7"><stop offset="0" stop-color="#a81010"/><stop offset="0.5" stop-color="#e01818"/><stop offset="1" stop-color="#d61414"/></linearGradient></defs><path d="M3.4 3.5 L17.6 17.1 M17.6 3.3 L3.1 17.7" stroke="#0e0202" stroke-width="4.4" stroke-linecap="round" opacity="0.45"/><path d="M3.4 3.5 L17.6 17.1" stroke="url(#rg1)" stroke-width="2.8" stroke-linecap="round"/><path d="M17.6 3.3 L3.1 17.7" stroke="url(#rg2)" stroke-width="2.4" stroke-linecap="round"/></svg>
<div class="t" style="left:20px;top:744px;transform:scaleX(0.9890);transform-origin:0 0;">Timeframe</div>
<div class="a" style="left:95px;top:738px;width:86px;height:28px;background:#2d2d30;box-sizing:border-box;border:1px solid #3f3f46;"></div>
<div class="t" style="left:100px;top:744px;transform:scaleX(0.9105);transform-origin:0 0;">Year</div>
<div class="a" style="left:167.0px;top:750px;width:0;height:0;border-left:4.0px solid transparent;border-right:4.0px solid transparent;border-top:5px solid #9a9a9a"></div>
<div class="t" style="left:189px;top:744px;transform:scaleX(1.0030);transform-origin:0 0;">Interval</div>
<div class="a" style="left:242px;top:738px;width:50px;height:28px;background:#1e1e1e;box-sizing:border-box;border:1px solid #3f3f46;"></div>
<svg class="a" style="left:258px;top:746px" width="8" height="13" viewBox="0 0 8 13"><rect x="5" y="1" width="2" height="11" fill="#dcdcdc"/><path d="M2.2 3.6 L5.6 1.3" stroke="#dcdcdc" stroke-width="1.3" stroke-linecap="round"/></svg>
<div class="a" style="left:278.75px;top:742.8px;width:0;height:0;border-left:4.25px solid transparent;border-right:4.25px solid transparent;border-bottom:4.3px solid #9a9a9a"></div>
<div class="a" style="left:278.75px;top:756px;width:0;height:0;border-left:4.25px solid transparent;border-right:4.25px solid transparent;border-top:4.3px solid #9a9a9a"></div>
<div class="t" style="left:300px;top:744px;transform:scaleX(1.0176);transform-origin:0 0;">Build mode</div>
<div class="a" style="left:384px;top:738px;width:290px;height:28px;background:#2d2d30;box-sizing:border-box;border:1px solid #3f3f46;"></div>
<div class="t" style="left:389px;top:744px;transform:scaleX(0.9823);transform-origin:0 0;">Lower timeframe (OHLC points)</div>
<div class="a" style="left:660.0px;top:750px;width:0;height:0;border-left:4.0px solid transparent;border-right:4.0px solid transparent;border-top:5px solid #9a9a9a"></div>
<div class="t" style="left:682px;top:744px;transform:scaleX(0.9601);transform-origin:0 0;">Source</div>
<div class="a" style="left:735px;top:738px;width:86px;height:28px;background:#2d2d30;box-sizing:border-box;border:1px solid #3f3f46;"></div>
<div class="t" style="left:740px;top:744px;transform:scaleX(0.9499);transform-origin:0 0;">Second</div>
<div class="a" style="left:807.0px;top:750px;width:0;height:0;border-left:4.0px solid transparent;border-right:4.0px solid transparent;border-top:5px solid #9a9a9a"></div>
<div class="t" style="left:829px;top:744px;transform:scaleX(0.9551);transform-origin:0 0;">Price Type</div>
<div class="a" style="left:904px;top:738px;width:64px;height:28px;background:#2d2d30;box-sizing:border-box;border:1px solid #3f3f46;"></div>
<div class="t" style="left:909px;top:744px;transform:scaleX(0.8939);transform-origin:0 0;">Ask</div>
<div class="a" style="left:954.0px;top:750px;width:0;height:0;border-left:4.0px solid transparent;border-right:4.0px solid transparent;border-top:5px solid #9a9a9a"></div>
<svg class="a" style="left:974px;top:742px" width="20" height="20" viewBox="0 0 20 20"><line x1="4" y1="17.2" x2="8.8" y2="12.2" stroke="#aaaaaa" stroke-width="2.8" stroke-linecap="round"/><line x1="4.1" y1="17.1" x2="8.4" y2="12.6" stroke="#262626" stroke-width="0.8" stroke-linecap="round"/><circle cx="13" cy="8" r="5.7" fill="none" stroke="#b2b2b2" stroke-width="1.3"/><circle cx="13" cy="8" r="4.3" fill="#9e9e9e"/></svg>
<svg class="a" style="left:1002px;top:743px" width="20" height="20" viewBox="0 0 20 20"><defs><linearGradient id="rg1" gradientUnits="userSpaceOnUse" x1="3.4" y1="3.5" x2="17.6" y2="17.1"><stop offset="0" stop-color="#e23434"/><stop offset="0.5" stop-color="#e01818"/><stop offset="1" stop-color="#a60c0c"/></linearGradient><linearGradient id="rg2" gradientUnits="userSpaceOnUse" x1="17.6" y1="3.3" x2="3.1" y2="17.7"><stop offset="0" stop-color="#a81010"/><stop offset="0.5" stop-color="#e01818"/><stop offset="1" stop-color="#d61414"/></linearGradient></defs><path d="M3.4 3.5 L17.6 17.1 M17.6 3.3 L3.1 17.7" stroke="#0e0202" stroke-width="4.4" stroke-linecap="round" opacity="0.45"/><path d="M3.4 3.5 L17.6 17.1" stroke="url(#rg1)" stroke-width="2.8" stroke-linecap="round"/><path d="M17.6 3.3 L3.1 17.7" stroke="url(#rg2)" stroke-width="2.4" stroke-linecap="round"/></svg>
<div class="a" style="left:1171px;top:486px;width:134px;height:28px;background:#2d2d30;box-sizing:border-box;border:1px solid #3f3f46;"></div>
<div class="t" style="left:1177px;top:492px;transform:scaleX(0.9967);transform-origin:0 0;">Add Timeframe</div>
<div class="a" style="left:1291.0px;top:497px;width:0;height:0;border-left:4.0px solid transparent;border-right:4.0px solid transparent;border-top:5px solid #9a9a9a"></div>
<svg class="a" style="left:1321px;top:589px" width="20" height="20" viewBox="0 0 20 20"><defs><linearGradient id="rg1" gradientUnits="userSpaceOnUse" x1="3.4" y1="3.5" x2="17.6" y2="17.1"><stop offset="0" stop-color="#e23434"/><stop offset="0.5" stop-color="#e01818"/><stop offset="1" stop-color="#a60c0c"/></linearGradient><linearGradient id="rg2" gradientUnits="userSpaceOnUse" x1="17.6" y1="3.3" x2="3.1" y2="17.7"><stop offset="0" stop-color="#a81010"/><stop offset="0.5" stop-color="#e01818"/><stop offset="1" stop-color="#d61414"/></linearGradient></defs><path d="M3.4 3.5 L17.6 17.1 M17.6 3.3 L3.1 17.7" stroke="#0e0202" stroke-width="4.4" stroke-linecap="round" opacity="0.45"/><path d="M3.4 3.5 L17.6 17.1" stroke="url(#rg1)" stroke-width="2.8" stroke-linecap="round"/><path d="M17.6 3.3 L3.1 17.7" stroke="url(#rg2)" stroke-width="2.4" stroke-linecap="round"/></svg>
<div class="a" style="left:2px;top:787px;width:1544px;height:31px;background:#444444;"></div>
<div class="t" style="left:9px;top:794px;transform:scaleX(1.0191);transform-origin:0 0;">Data Modeling</div>
<div class="a" style="left:2px;top:818px;width:1px;height:94px;background:#434343;"></div>
<div class="a" style="left:1545px;top:818px;width:1px;height:94px;background:#434343;"></div>
<div class="a" style="left:2px;top:911px;width:1544px;height:1px;background:#434343;"></div>
<div class="t" style="left:6px;top:831px;transform:scaleX(0.9765);transform-origin:0 0;">Dates</div>
<div class="a" style="left:94px;top:825px;width:141px;height:27px;background:#2d2d30;box-sizing:border-box;border:1px solid #3f3f46;"></div>
<div class="t" style="left:99px;top:831px;transform:scaleX(0.9622);transform-origin:0 0;">Custom Ranges</div>
<div class="a" style="left:221.0px;top:837px;width:0;height:0;border-left:4.0px solid transparent;border-right:4.0px solid transparent;border-top:5px solid #9a9a9a"></div>
<div class="t" style="left:239px;top:831px;transform:scaleX(0.9970);transform-origin:0 0;">From</div>
<div class="a" style="left:276px;top:823px;width:163px;height:28px;background:#1e1e1e;box-sizing:border-box;border:1px solid #3f3f46;"></div>
<div class="a" style="left:439px;top:823px;width:18px;height:28px;background:#2a2a2a;box-sizing:border-box;border:1px solid #3f3f46;"></div>
<div class="a" style="left:276px;top:853px;width:181px;height:1px;background:#c0841a;"></div>
<div class="t" style="left:284px;top:829px;transform:scaleX(1.0003);transform-origin:0 0;">6/10/2024 8:53 AM</div>
<div class="a" style="left:444.5px;top:834px;width:0;height:0;border-left:4.0px solid transparent;border-right:4.0px solid transparent;border-top:5px solid #9a9a9a"></div>
<div class="t" style="left:461px;top:831px;transform:scaleX(0.9355);transform-origin:0 0;">To</div>
<div class="a" style="left:480px;top:823px;width:170px;height:28px;background:#1e1e1e;box-sizing:border-box;border:1px solid #3f3f46;"></div>
<div class="a" style="left:650px;top:823px;width:19px;height:28px;background:#2d2d2d;box-sizing:border-box;border:1px solid #111;"></div>
<div class="a" style="left:480px;top:853px;width:170px;height:1px;background:#c0841a;"></div>
<div class="t" style="left:488px;top:829px;transform:scaleX(1.0038);transform-origin:0 0;">6/10/2024 11:49 AM</div>
<div class="a" style="left:655.5px;top:834px;width:0;height:0;border-left:4.0px solid transparent;border-right:4.0px solid transparent;border-top:5px solid #e0e0e0"></div>
<svg class="a" style="left:421px;top:832px" width="10" height="10" viewBox="0 0 10 10"><rect x="0.4" y="0.4" width="2.4" height="2.4" fill="#b4b4b4"/><rect x="4.0" y="0.4" width="2.4" height="2.4" fill="#b4b4b4"/><rect x="7.6000000000000005" y="0.4" width="2.4" height="2.4" fill="#b4b4b4"/><rect x="0.4" y="4.0" width="2.4" height="2.4" fill="#b4b4b4"/><rect x="4.0" y="4.0" width="2.4" height="2.4" fill="#b4b4b4"/><rect x="7.6000000000000005" y="4.0" width="2.4" height="2.4" fill="#b4b4b4"/><rect x="0.4" y="7.6000000000000005" width="2.4" height="2.4" fill="#b4b4b4"/><rect x="4.0" y="7.6000000000000005" width="2.4" height="2.4" fill="#b4b4b4"/><rect x="7.6000000000000005" y="7.6000000000000005" width="2.4" height="2.4" fill="#b4b4b4"/></svg>
<svg class="a" style="left:633px;top:832px" width="10" height="10" viewBox="0 0 10 10"><rect x="0.4" y="0.4" width="2.4" height="2.4" fill="#b4b4b4"/><rect x="4.0" y="0.4" width="2.4" height="2.4" fill="#b4b4b4"/><rect x="7.6000000000000005" y="0.4" width="2.4" height="2.4" fill="#b4b4b4"/><rect x="0.4" y="4.0" width="2.4" height="2.4" fill="#b4b4b4"/><rect x="4.0" y="4.0" width="2.4" height="2.4" fill="#b4b4b4"/><rect x="7.6000000000000005" y="4.0" width="2.4" height="2.4" fill="#b4b4b4"/><rect x="0.4" y="7.6000000000000005" width="2.4" height="2.4" fill="#b4b4b4"/><rect x="4.0" y="7.6000000000000005" width="2.4" height="2.4" fill="#b4b4b4"/><rect x="7.6000000000000005" y="7.6000000000000005" width="2.4" height="2.4" fill="#b4b4b4"/></svg>
<div class="a" style="left:677px;top:825px;width:163px;height:28px;background:#2d2d30;box-sizing:border-box;border:1px solid #3f3f46;"></div>
<div class="t" style="left:683px;top:830px;transform:scaleX(0.9953);transform-origin:0 0;">Download missed data</div>
<div class="t" style="left:6px;top:864px;transform:scaleX(0.9501);transform-origin:0 0;">Weekdays</div>
<div class="a" style="left:95px;top:863px;width:17px;height:16px;background:#2d2d30;box-sizing:border-box;border:1px solid #3f3f46;"></div>
<div class="t" style="left:120px;top:864px;transform:scaleX(0.9671);transform-origin:0 0;">Custom</div>
<div class="t" style="left:6px;top:891px;transform:scaleX(0.9695);transform-origin:0 0;">Time ranges</div>
<div class="a" style="left:95px;top:891px;width:17px;height:16px;background:#2d2d30;box-sizing:border-box;border:1px solid #3f3f46;"></div>
<div class="t" style="left:120px;top:891px;transform:scaleX(0.9671);transform-origin:0 0;">Custom</div>
<div class="a" style="left:650px;top:851px;width:361px;height:121px;box-sizing:border-box;border:1px solid #3a3a3e;background:linear-gradient(#474747,#252525)"></div>
<div class="a" style="left:688px;top:911px;width:322px;height:1px;background:#3c3c40;"></div>
<div class="m" style="left:695px;top:859px;transform:scaleX(1.0084);transform-origin:0 0;">Max date available for all instruments/periods</div>
<div class="m" style="left:695px;top:888px;transform:scaleX(1.0146);transform-origin:0 0;">Most max date from input data</div>
<div class="m" style="left:695px;top:919px;transform:scaleX(0.9549);transform-origin:0 0;">Today</div>
<div class="m" style="left:695px;top:948px;transform:scaleX(1.0351);transform-origin:0 0;">Now</div>
<div class="a" style="left:682px;top:984px;width:410px;height:190px;background:#222222;box-sizing:border-box;border:1px solid #3c3c42;"></div>
<div class="t" style="left:688px;top:991px;transform:scaleX(1.0009);transform-origin:0 0;">Local data does not cover the requested period for elements</div>
<div class="t" style="left:695px;top:1011px;">&bull;</div>
<div class="t" style="left:706px;top:1011px;transform:scaleX(0.9585);transform-origin:0 0;">GBP/USD, Bid, Tick: 6/10/2024 9:50:02 AM</div>
<div class="t" style="left:695px;top:1031px;">&bull;</div>
<div class="t" style="left:706px;top:1031px;transform:scaleX(0.9417);transform-origin:0 0;">GBP/USD, Bid, Second: no data</div>
<div class="t" style="left:695px;top:1051px;">&bull;</div>
<div class="t" style="left:706px;top:1051px;transform:scaleX(0.9738);transform-origin:0 0;">GBP/USD, Bid, Minute: 6/10/2024 9:49 AM</div>
<div class="t" style="left:695px;top:1071px;">&bull;</div>
<div class="t" style="left:706px;top:1071px;transform:scaleX(0.9601);transform-origin:0 0;">EUR/USD, Bid, Tick: 6/10/2024 9:50:02 AM</div>
<div class="t" style="left:695px;top:1091px;">&bull;</div>
<div class="t" style="left:706px;top:1091px;transform:scaleX(0.9618);transform-origin:0 0;">EUR/USD, Bid, Second: 6/10/2024 9:50:01 AM</div>
<div class="t" style="left:695px;top:1111px;">&bull;</div>
<div class="t" style="left:706px;top:1111px;transform:scaleX(0.9755);transform-origin:0 0;">EUR/USD, Bid, Minute: 6/10/2024 9:49 AM</div>
<div class="t" style="left:695px;top:1131px;">&bull;</div>
<div class="t" style="left:706px;top:1131px;transform:scaleX(0.9692);transform-origin:0 0;">EUR/USD, Bid, Hour: 6/10/2024 8:00 AM</div>
<div class="t" style="left:695px;top:1151px;">&bull;</div>
<div class="t" style="left:706px;top:1151px;transform:scaleX(0.9382);transform-origin:0 0;">EUR/USD, Last, Tick: no data</div>
</body></html>
